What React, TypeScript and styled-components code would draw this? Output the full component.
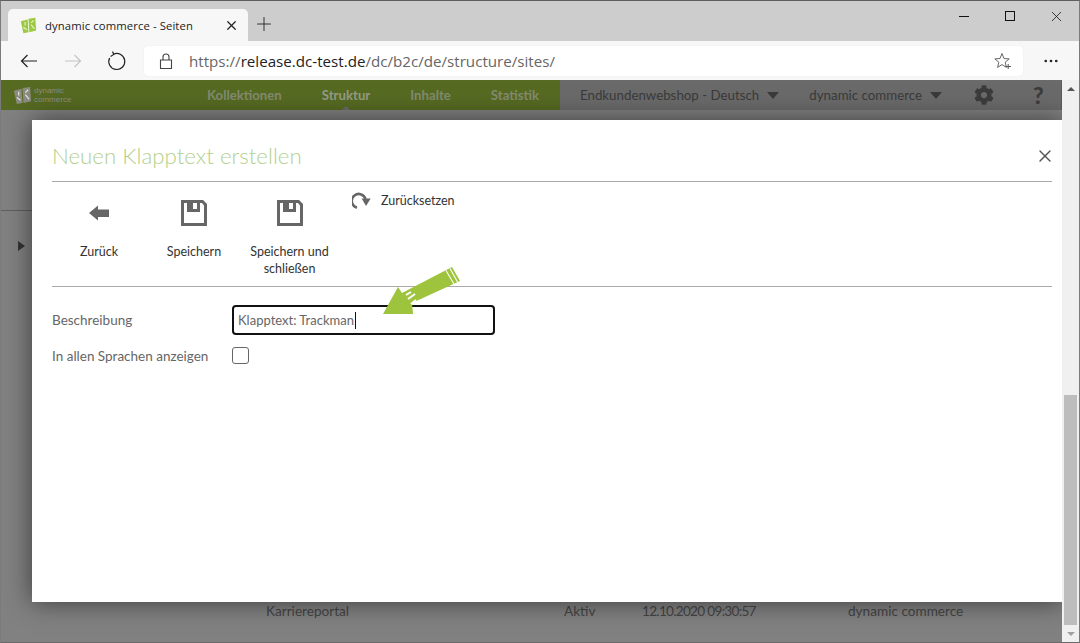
import React from "react";
import styled, {createGlobalStyle} from "styled-components";
import {Plus, X, MoreHorizontal} from "lucide-react";
import {FaCog} from "react-icons/fa";

const TAB_FONT = `"Open Sans", "Noto Sans", sans-serif`;
const PAGE_FONT = `Lato, "Open Sans", sans-serif`;

const GlobalStyle = createGlobalStyle`
  html, body {
    margin: 0;
    padding: 0;
    width: 1080px;
    height: 643px;
    overflow: hidden;
    background: #7f7f7f;
    font-family: ${TAB_FONT};
  }
  * { box-sizing: border-box; }
`

const Logo = ({size, color}: {size: number, color: string}) =>
{
    return(
        <svg width={size} height={size} viewBox="0 0 20 20">
            <path d="M1 5 L9 3 L10 18 L4 19 Z" fill={color}/>
            <path d="M10 2 L18 1 L19 16 L11 18 Z" fill={color}/>
            <path d="M6 6 V10 M4 12 L8 15 M13 7 L16 4 M13 9 L17 14" stroke="#fff" strokeWidth="1.3" fill="none" opacity="0.75"/>
        </svg>
    )
}

const FloppyIcon = () =>
{
    return(
        <svg width="28" height="28" viewBox="0 0 28 28">
            <path fillRule="evenodd" fill="#666" d="M1 1 H23 L27 5 V27 H1 Z M4 4 V24 H24 V6.5 L22 4 H20 V13 H7 V4 Z M13 4 V10 H17 V4 Z"/>
        </svg>
    )
}

const BrowserArrow = ({color, flip}: {color: string, flip?: boolean}) =>
{
    return(
        <svg width="18" height="14" viewBox="0 0 18 14" style={flip ? {transform: 'scaleX(-1)'} : undefined}>
            <path d="M17 7 H1.5 M7.5 1 L1.5 7 L7.5 13" stroke={color} strokeWidth="1.2" fill="none"/>
        </svg>
    )
}

const App = () =>
{
    return(
    <Window>
        <GlobalStyle/>
        <TabStrip>
            <Tab>
                <Logo size={17} color="#9cc93f"/>
                <TabTitle>dynamic commerce - Seiten</TabTitle>
                <X size={15} strokeWidth={2} color="#222"/>
            </Tab>
            <NewTab><Plus size={22} strokeWidth={1.1}/></NewTab>
            <WindowButtons>
                <WindowButton><MinimizeLine/></WindowButton>
                <WindowButton><MaximizeBox/></WindowButton>
                <WindowButton><X size={17} strokeWidth={1.1}/></WindowButton>
            </WindowButtons>
        </TabStrip>
        <NavBar>
            <NavButton><BrowserArrow color="#222"/></NavButton>
            <NavButton><BrowserArrow color="#c4c4c4" flip/></NavButton>
            <NavButton>
                <svg width="20" height="20" viewBox="0 0 20 20">
                    <path d="M6.5 3.2 A8 8 0 1 1 2.6 7" stroke="#222" strokeWidth="1.2" fill="none"/>
                    <path d="M5.5 0.5 L6.8 3.4 L3.6 5.6" stroke="#222" strokeWidth="1.2" fill="none"/>
                </svg>
            </NavButton>
            <AddressBar>
                <svg width="14" height="18" viewBox="0 0 14 18">
                    <path d="M1.5 8 H12.5 V16.5 H1.5 Z M4 8 V5 A3 3 0 0 1 10 5 V8" stroke="#444" strokeWidth="1.1" fill="none"/>
                </svg>
                <Url>https://<strong>release.dc-test.de</strong>/dc/b2c/de/structure/sites/</Url>
                <svg width="18" height="18" viewBox="0 0 18 18">
                    <path d="M8 1.5 L10 6.5 L15.2 6.9 L11.2 10.2 L12.4 15.4 L8 12.6 L3.6 15.4 L4.8 10.2 L0.8 6.9 L6 6.5 Z" stroke="#666" strokeWidth="1" fill="none"/>
                    <path d="M11.5 14.5 H17 M14.2 12 V17" stroke="#555" strokeWidth="1"/>
                </svg>
            </AddressBar>
            <MoreButton><MoreHorizontal size={18} strokeWidth={1.6} color="#222"/></MoreButton>
        </NavBar>
        <Viewport>
            <Page>
                <SiteHeader>
                    <SiteBrand>
                        <Logo size={19} color="#8b8b80"/>
                        <BrandText>dynamic<br/>commerce</BrandText>
                    </SiteBrand>
                    <SiteNav>
                        <SiteNavItem>Kollektionen</SiteNavItem>
                        <SiteNavItem $active>Struktur</SiteNavItem>
                        <SiteNavItem>Inhalte</SiteNavItem>
                        <SiteNavItem>Statistik</SiteNavItem>
                    </SiteNav>
                    <SiteTools>
                        <ToolLabel>Endkundenwebshop - Deutsch<Caret/></ToolLabel>
                        <ToolLabel>dynamic commerce<Caret/></ToolLabel>
                        <GearIcon size={20} color="#3c3c3c"/>
                        <HelpMark>?</HelpMark>
                    </SiteTools>
                </SiteHeader>
                <Backdrop>
                    <HairLine/>
                    <SideArrow/>
                    <BackgroundRow>
                        <BackgroundCell $width={298}>Karriereportal</BackgroundCell>
                        <BackgroundCell $width={78}>Aktiv</BackgroundCell>
                        <BackgroundCell $width={206} $tight>12.10.2020 09:30:57</BackgroundCell>
                        <BackgroundCell $width={130}>dynamic commerce</BackgroundCell>
                    </BackgroundRow>
                </Backdrop>
                <Dialog>
                    <DialogHeader>
                        <DialogTitle>Neuen Klapptext erstellen</DialogTitle>
                        <CloseButton><X size={20} strokeWidth={1.7}/></CloseButton>
                    </DialogHeader>
                    <Toolbar>
                        <ToolbarButton $width={94}>
                            <ToolbarIcon>
                                <svg width="22" height="22" viewBox="0 0 22 22">
                                    <path d="M1 11 L10 3.5 V7.5 H21 V15 H10 V18.5 Z" fill="#666"/>
                                </svg>
                            </ToolbarIcon>
                            <ToolbarLabel>Zurück</ToolbarLabel>
                        </ToolbarButton>
                        <ToolbarButton $width={96}>
                            <ToolbarIcon><FloppyIcon/></ToolbarIcon>
                            <ToolbarLabel>Speichern</ToolbarLabel>
                        </ToolbarButton>
                        <ToolbarButton $width={95}>
                            <ToolbarIcon><FloppyIcon/></ToolbarIcon>
                            <ToolbarLabel>Speichern und schließen</ToolbarLabel>
                        </ToolbarButton>
                        <ResetButton>
                            <svg width="19" height="17" viewBox="0 0 19 17">
                                <path d="M5 15.7 A7 7 0 1 1 13.5 7" stroke="#666" strokeWidth="2.6" fill="none"/>
                                <path d="M9.7 6.5 L18.7 6.5 L14 14 Z" fill="#666"/>
                            </svg>
                            <ResetLabel>Zurücksetzen</ResetLabel>
                        </ResetButton>
                    </Toolbar>
                    <Form>
                        <FormRow>
                            <FormLabel>Beschreibung</FormLabel>
                            <FieldWrap>
                                <TextField>Klapptext: Trackman<TextCursor/></TextField>
                                <Pointer viewBox="0 0 79 48" width="79" height="48">
                                    <path d="M1 47 L16 20 L20 26 L70 0 L78 14 L30 36 L31 47 Z" fill="#9dc43c"/>
                                    <path d="M64 3.5 L72 17 M68 1.5 L75.5 15" stroke="#fff" strokeWidth="1.1"/>
                                    <path d="M24 28 L29 25 M26 32 L33 27 M29 37 L34 33" stroke="#fff" strokeWidth="2"/>
                                </Pointer>
                            </FieldWrap>
                        </FormRow>
                        <FormRow>
                            <FormLabel>In allen Sprachen anzeigen</FormLabel>
                            <CheckBox/>
                        </FormRow>
                    </Form>
                </Dialog>
            </Page>
            <ScrollBar>
                <ScrollArrow $up/>
                <ScrollTrack><ScrollThumb/></ScrollTrack>
                <ScrollArrow/>
            </ScrollBar>
        </Viewport>
    </Window>
    )
}

const Window = styled.div`
  width: 1080px;
  height: 643px;
  display: flex;
  flex-direction: column;
  border-top: 1px solid #5f5f5f;
  border-left: 1px solid #7b7b7b;
  border-right: 1px solid #7b7b7b;
  border-bottom: 1px solid #6a6a6a;
  overflow: hidden;
`

const TabStrip = styled.div`
  height: 40px;
  flex-shrink: 0;
  display: flex;
  align-items: flex-end;
  padding-left: 7px;
  background: #cdcdcd;
`

const Tab = styled.div`
  width: 240px;
  height: 32px;
  display: flex;
  align-items: center;
  padding: 0 9px 0 12px;
  background: #f7f7f7;
  border-radius: 5px 5px 0 0;
`

const TabTitle = styled.span`
  flex: 1;
  margin-left: 8px;
  font-size: 11.3px;
  letter-spacing: 0.1px;
  color: #222;
`

const NewTab = styled.div`
  width: 31px;
  height: 34px;
  display: flex;
  align-items: center;
  justify-content: center;
  color: #333;
`

const WindowButtons = styled.div`
  margin-left: auto;
  align-self: flex-start;
  display: flex;
`

const WindowButton = styled.div`
  width: 46px;
  height: 30px;
  display: flex;
  align-items: center;
  justify-content: center;
  color: #111;
`

const MinimizeLine = styled.div`
  width: 10px;
  height: 1px;
  background: #111;
`

const MaximizeBox = styled.div`
  width: 10px;
  height: 10px;
  border: 1px solid #111;
`

const NavBar = styled.div`
  height: 39px;
  flex-shrink: 0;
  display: flex;
  align-items: center;
  padding: 0 0 0 6px;
  background: #f7f7f7;
`

const NavButton = styled.div`
  width: 44px;
  height: 32px;
  display: flex;
  align-items: center;
  justify-content: center;
`

const AddressBar = styled.div`
  width: 879px;
  height: 30px;
  margin-left: 5px;
  display: flex;
  align-items: center;
  padding: 0 11px 0 15px;
  background: #fff;
  border-radius: 4px;
  box-shadow: 0 0 1px #ddd;
`

const Url = styled.span`
  flex: 1;
  margin-left: 16px;
  font-size: 15.15px;
  color: #666;

  strong {
    font-weight: 400;
    color: #222;
  }
`

const MoreButton = styled.div`
  flex: 1;
  display: flex;
  justify-content: center;
`

const Viewport = styled.div`
  flex: 1;
  min-height: 0;
  display: flex;
`

const Page = styled.div`
  position: relative;
  flex: 1;
  min-width: 0;
  display: flex;
  flex-direction: column;
  font-family: ${PAGE_FONT};
  background: #818181;
`

const SiteHeader = styled.div`
  height: 30px;
  flex-shrink: 0;
  display: flex;
  align-items: center;
  background: #566a22;
  color: #8d8d85;
  border-right: 1px solid #566a22;
`

const SiteBrand = styled.div`
  width: 206px;
  display: flex;
  align-items: center;
  gap: 2px;
  padding-left: 12px;
`

const BrandText = styled.span`
  font-family: "Liberation Sans", sans-serif;
  font-size: 8px;
  line-height: 9.3px;
  color: #8b8b80;
`

const SiteNav = styled.nav`
  width: 353px;
  height: 100%;
  display: flex;
  align-items: center;
  gap: 40px;
`

const SiteNavItem = styled.div<{$active?: boolean}>`
  position: relative;
  height: 100%;
  display: flex;
  align-items: center;
  font-size: 13.2px;
  font-weight: 700;
  color: ${props => props.$active ? '#959b85' : '#838a70'};

  &::after {
    content: "";
    display: ${props => props.$active ? 'block' : 'none'};
    position: absolute;
    left: 50%;
    bottom: 0;
    margin-left: -4px;
    border: 4px solid transparent;
    border-top: 0;
    border-bottom-color: #6b6b6b;
  }
`

const SiteTools = styled.div`
  flex: 1;
  height: 100%;
  display: flex;
  align-items: center;
  gap: 30px;
  padding-left: 20px;
  background: #6a6a6a;
`

const ToolLabel = styled.div`
  display: flex;
  align-items: center;
  gap: 8px;
  font-size: 13.3px;
  color: #3a3a3a;
`

const Caret = styled.span`
  border-left: 6px solid transparent;
  border-right: 6px solid transparent;
  border-top: 7px solid #3a3a3a;
`

const GearIcon = styled(FaCog)`
  margin-left: 2px;
`

const HelpMark = styled.span`
  margin-left: 9px;
  font-size: 23px;
  font-weight: 900;
  color: #3c3c3c;
`

const Backdrop = styled.div`
  position: relative;
  flex: 1;
  min-height: 0;
`

const HairLine = styled.div`
  position: absolute;
  left: 0;
  top: 100px;
  width: 31px;
  height: 1px;
  background: #5e5e5e;
`

const SideArrow = styled.span`
  position: absolute;
  left: 17px;
  top: 131px;
  border-top: 5px solid transparent;
  border-bottom: 5px solid transparent;
  border-left: 7px solid #333;
`

const BackgroundRow = styled.div`
  position: absolute;
  left: 265px;
  bottom: 23px;
  display: flex;
`

const BackgroundCell = styled.span<{$width: number, $tight?: boolean}>`
  width: ${props => props.$width}px;
  font-size: 13.6px;
  letter-spacing: ${props => props.$tight ? '-0.7px' : '0'};
  color: #444;
`

const Dialog = styled.section`
  position: absolute;
  left: 31px;
  right: -1px;
  top: 40px;
  height: 482px;
  padding: 0 11px 0 20px;
  background: #fff;
  box-shadow: 0 0 24px rgba(0, 0, 0, 0.55);
`

const DialogHeader = styled.header`
  height: 62px;
  display: flex;
  align-items: center;
  justify-content: space-between;
  padding-top: 10px;
  border-bottom: 1px solid #aaa;
`

const DialogTitle = styled.h2`
  margin: 0;
  font-size: 22.3px;
  font-weight: 300;
  font-family: ${PAGE_FONT};
  color: #b3cf8c;
`

const CloseButton = styled.div`
  display: flex;
  margin-right: -3px;
  color: #555;
`

const Toolbar = styled.div`
  height: 105px;
  display: flex;
  border-bottom: 1px solid #aaa;
`

const ToolbarButton = styled.div<{$width: number}>`
  width: ${props => props.$width}px;
  padding-top: 17px;
  display: flex;
  flex-direction: column;
  align-items: center;
`

const ToolbarIcon = styled.div`
  height: 28px;
  display: flex;
  align-items: center;
`

const ToolbarLabel = styled.div`
  margin-top: 16px;
  font-size: 12.5px;
  line-height: 17px;
  text-align: center;
  color: #333;
`

const ResetButton = styled.div`
  display: flex;
  align-items: center;
  align-self: flex-start;
  gap: 10px;
  margin: 10px 0 0 15px;
`

const ResetLabel = styled.span`
  font-size: 12.5px;
  color: #333;
`

const Form = styled.div`
  padding-top: 18px;
  display: flex;
  flex-direction: column;
  gap: 12px;
`

const FormRow = styled.div`
  display: flex;
  align-items: center;
`

const FormLabel = styled.label`
  width: 180px;
  font-size: 13.5px;
  color: #666;
`

const FieldWrap = styled.div`
  position: relative;
`

const TextField = styled.div`
  width: 263px;
  height: 30px;
  display: flex;
  align-items: center;
  padding-left: 4px;
  font-size: 13px;
  color: #666;
  background: #fff;
  border: 2px solid #111;
  border-radius: 4px;
`

const TextCursor = styled.span`
  width: 1px;
  height: 17px;
  margin-left: 1px;
  background: #111;
`

const Pointer = styled.svg`
  position: absolute;
  left: 150px;
  top: -38px;
`

const CheckBox = styled.span`
  width: 17px;
  height: 17px;
  background: #fff;
  border: 1px solid #666;
  border-radius: 3px;
`

const ScrollBar = styled.div`
  position: relative;
  z-index: 1;
  width: 17px;
  flex-shrink: 0;
  display: flex;
  flex-direction: column;
  background: #f0f0f0;
`

const ScrollArrow = styled.div<{$up?: boolean}>`
  height: 17px;
  flex-shrink: 0;
  display: flex;
  align-items: center;
  justify-content: center;

  &::before {
    content: "";
    border-left: 4px solid transparent;
    border-right: 4px solid transparent;
    ${props => props.$up ? 'border-bottom: 4px solid #555;' : 'border-top: 4px solid #a0a0a0;'}
  }
`

const ScrollTrack = styled.div`
  flex: 1;
  display: flex;
  flex-direction: column;
  justify-content: flex-end;
  padding: 0 2px;
`

const ScrollThumb = styled.div`
  height: 230px;
  background: #bdbdbd;
`

export default App;
